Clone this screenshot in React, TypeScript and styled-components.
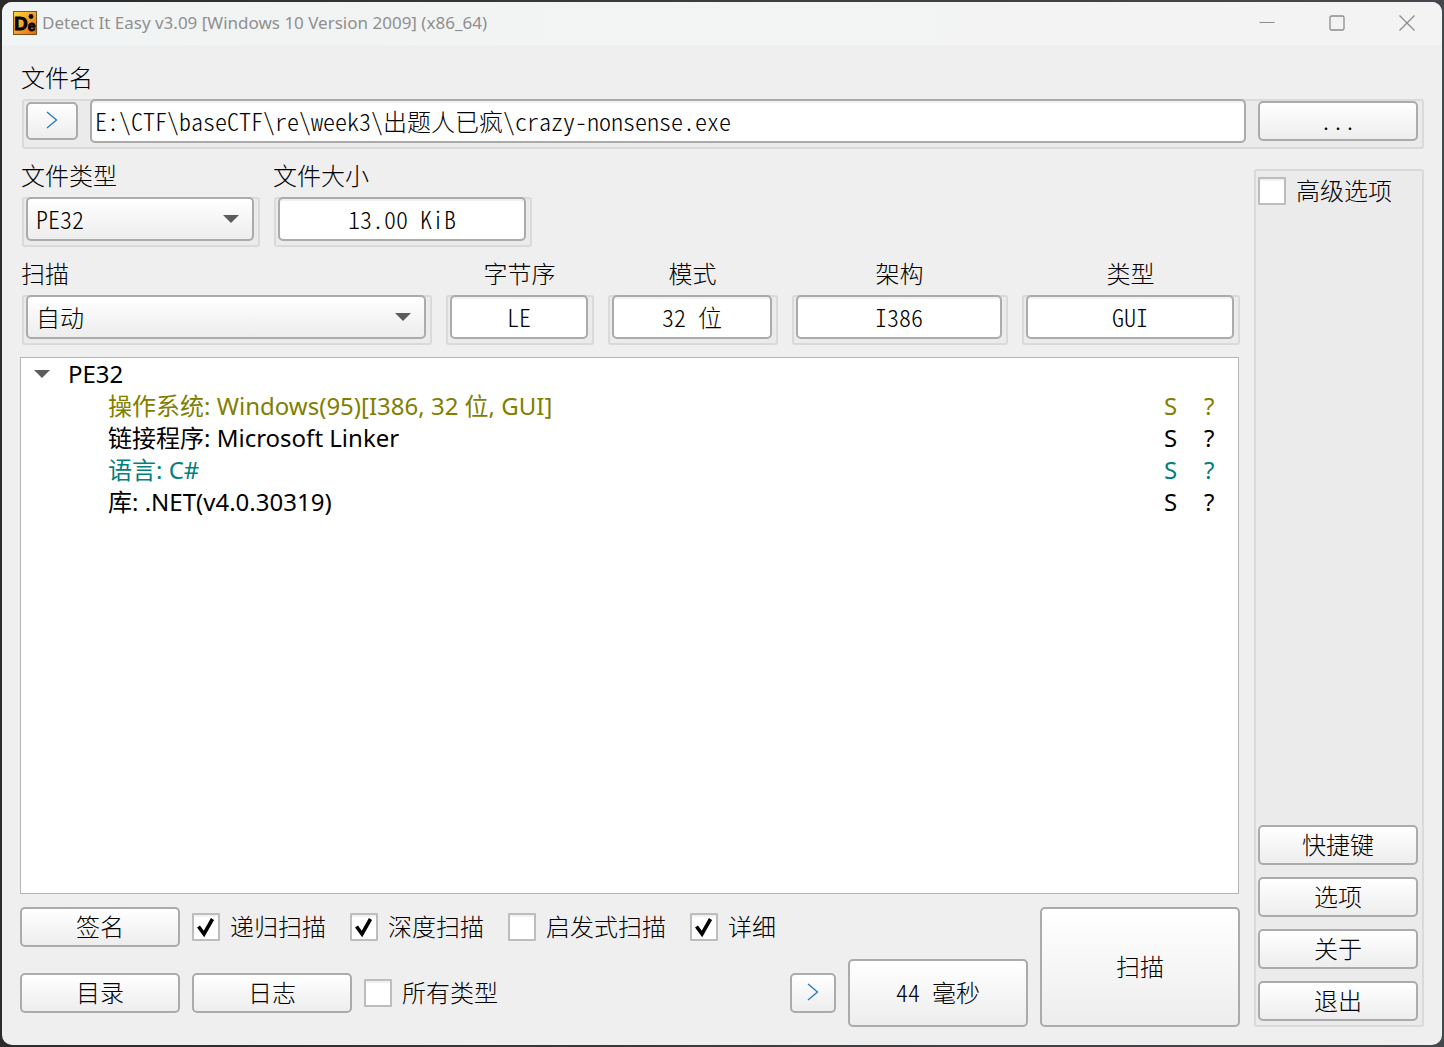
import React from 'react';
import styled, { createGlobalStyle, css } from 'styled-components';

const formFont = '"Noto Sans CJK SC", "Liberation Mono", monospace';
const treeFont = '"Noto Sans", "Noto Sans CJK SC", sans-serif';

const GlobalStyle = createGlobalStyle`
  *, *::before, *::after { box-sizing: border-box; }
  body {
    margin: 0;
    background: linear-gradient(90deg, #2b2b2b, #3c3c3c 50%, #45484c);
  }
  body, button, input, select {
    color: #000;
    font-family: ${formFont};
    font-size: 24px;
    font-weight: 300;
    line-height: 24px;
    font-feature-settings: "hwid";
  }
`;

const Desktop = styled.div`
  display: flex;
  min-height: 100vh;
  padding: 2px;
`;

const Window = styled.div`
  flex: 1;
  display: flex;
  flex-direction: column;
  min-width: 0;
  border-radius: 10px;
  background: #efefef;
  overflow: hidden;
`;

const TitleBar = styled.header`
  display: flex;
  align-items: center;
  height: 43px;
  padding: 0 11px 2px;
  gap: 5px;
  background: linear-gradient(90deg, #f1f4f4, #f3f3f3 70%);
`;

const Title = styled.h1`
  flex: 1;
  margin: 0;
  color: #8f8f8f;
  font-family: "Noto Sans", sans-serif;
  font-size: 17px;
  font-weight: 400;
  font-feature-settings: normal;
  white-space: nowrap;
`;

const Caption = styled.div`
  display: flex;
  gap: 22px;
`;

const CaptionButton = styled.button`
  display: grid;
  place-items: center;
  width: 48px;
  height: 36px;
  padding: 0;
  border: 0;
  background: none;
`;

const Body = styled.main`
  flex: 1;
  display: flex;
  flex-direction: column;
  padding: 20px 18px 18px;
`;

const Columns = styled.div`
  flex: 1;
  display: flex;
  gap: 14px;
`;

const Left = styled.div`
  flex: 1;
  display: flex;
  flex-direction: column;
  min-width: 0;
`;

const GroupRow = styled.div<{ $below?: number }>`
  display: flex;
  gap: 14px;
  padding: 0 0 ${(p) => p.$below ?? 14}px 2px;
`;

const Group = styled.div<{ $width?: number; $grow?: number; $center?: boolean }>`
  display: flex;
  flex-direction: column;
  gap: 10px;
  min-width: 0;
  ${(p) => p.$width && css`width: ${p.$width}px;`}
  ${(p) => p.$grow && css`flex: ${p.$grow} 1 0;`}
  ${(p) => p.$center && css`text-align: center;`}
`;

const Label = styled.label`
  display: block;
  margin-left: -1px;
  white-space: nowrap;
`;

const Frame = styled.div`
  display: flex;
  align-items: center;
  gap: 12px;
  padding: 0 6px 6px 4px;
  border-radius: 3px;
  background: #ebebeb;
  box-shadow: inset 0 0 0 2px #dadada;
`;

const control = css`
  border: 2px solid #ababab;
  border-radius: 5px;
`;

const TextBox = styled.input<{ $center?: boolean }>`
  ${control}
  flex: 1;
  width: 100%;
  min-width: 0;
  height: 44px;
  padding: 0 3px 2px;
  background: #fff;
  box-shadow: inset 0 2px 1px #f1f1f1;
  outline: none;
  text-align: ${(p) => (p.$center ? 'center' : 'left')};
`;

const Button = styled.button<{ $width?: number; $height?: number }>`
  ${control}
  display: grid;
  place-items: center;
  flex: none;
  width: ${(p) => p.$width ?? 160}px;
  height: ${(p) => p.$height ?? 40}px;
  padding: 0 0 2px;
  background: linear-gradient(#fff, #ededed);
`;

const SelectWrap = styled.div`
  flex: 1;
  display: grid;
  align-items: center;
  min-width: 0;

  & > * { grid-area: 1 / 1; }
  & > svg {
    justify-self: end;
    margin-right: 15px;
    pointer-events: none;
  }
`;

const SelectBox = styled.select`
  ${control}
  appearance: none;
  width: 100%;
  height: 44px;
  padding: 0 40px 0 8px;
  background: linear-gradient(#fff, #ededed);
  outline: none;
`;

const Tree = styled.ul`
  flex: 1;
  margin: 0 1px 13px 0;
  padding: 0;
  border: 1px solid #b4b4b4;
  background: #fff;
  list-style: none;
  font-family: ${treeFont};
  font-weight: 400;
  font-feature-settings: normal;
`;

const Branch = styled.ul`
  margin: 0;
  padding: 0;
  list-style: none;
`;

const TreeRow = styled.div<{ $color?: string; $child?: boolean }>`
  display: flex;
  align-items: center;
  height: 32px;
  padding-left: ${(p) => (p.$child ? 87 : 13)}px;
  color: ${(p) => p.$color ?? '#000'};
  white-space: nowrap;

  & > svg { margin-right: 18px; }
`;

const TreeText = styled.span`
  flex: 1;
`;

const TreeMark = styled.span`
  width: 40px;

  &:last-child { width: 34px; }
`;

const Bottom = styled.div`
  display: flex;
  gap: 12px;
`;

const BottomRows = styled.div`
  flex: 1;
  display: flex;
  flex-direction: column;
  gap: 12px;
`;

const BottomRow = styled.div`
  display: flex;
  align-items: center;
  gap: 12px;
`;

const Spacer = styled.div`
  flex: 1;
`;

const CheckLabel = styled.label`
  display: flex;
  align-items: center;
  gap: 10px;
  padding-right: 12px;
  white-space: nowrap;
`;

const CheckText = styled.span`
  padding-bottom: 2px;
`;

const CheckCell = styled.span`
  display: grid;

  & > * { grid-area: 1 / 1; }
  & > svg { visibility: hidden; pointer-events: none; }
  & > input:checked + svg { visibility: visible; }
`;

const CheckInput = styled.input`
  appearance: none;
  width: 28px;
  height: 28px;
  margin: 0;
  border: 2px solid #bdbdbd;
  border-radius: 1px;
  background: #fff;
  box-shadow: inset 0 2px 1px #f1f1f1;
`;

const Sidebar = styled.aside`
  display: flex;
  flex-direction: column;
  gap: 12px;
  width: 170px;
  margin-top: 6px;
  padding: 8px 6px 6px 4px;
  border-radius: 3px;
  background: #ebebeb;
  box-shadow: inset 0 0 0 2px #dadada;
`;

function Logo() {
  return (
    <svg width="24" height="24" viewBox="0 0 24 24" aria-hidden="true">
      <defs>
        <linearGradient id="logo" x1="0" y1="0" x2="1" y2="1">
          <stop offset="0" stopColor="#ffd83a" />
          <stop offset="0.5" stopColor="#f5a02a" />
          <stop offset="1" stopColor="#e8621a" />
        </linearGradient>
      </defs>
      <rect x="0.5" y="0.5" width="23" height="23" fill="url(#logo)" stroke="#7a5420" />
      <text x="1" y="19" fontFamily="Liberation Sans, sans-serif" fontWeight="700" fontSize="19" stroke="#000" strokeWidth="0.8">
        D<tspan fontSize="14" dy="1">e</tspan>
      </text>
      <circle cx="18" cy="5.5" r="2.4" />
    </svg>
  );
}

function Arrow() {
  return (
    <svg width="16" height="8" viewBox="0 0 16 8" aria-hidden="true">
      <path d="M0 0H16L8 8Z" fill="#5c5c5c" />
    </svg>
  );
}

function Chevron() {
  return (
    <svg width="12" height="18" viewBox="0 0 12 18" fill="none" stroke="#2b7dbd" strokeWidth="1.4" aria-hidden="true">
      <path d="M1 1L10.5 9L1 17" />
    </svg>
  );
}

function Check({ children, checked }: { children: string; checked?: boolean }) {
  return (
    <CheckLabel>
      <CheckCell>
        <CheckInput type="checkbox" defaultChecked={checked} />
        <svg width="28" height="28" viewBox="0 0 28 28" fill="none" stroke="#000" strokeWidth="3.6" aria-hidden="true">
          <path d="M6.5 13.5L12 21L20.5 6" />
        </svg>
      </CheckCell>
      <CheckText>{children}</CheckText>
    </CheckLabel>
  );
}

function Select({ id, options }: { id: string; options: string[] }) {
  return (
    <SelectWrap>
      <SelectBox id={id}>
        {options.map((o) => <option key={o}>{o}</option>)}
      </SelectBox>
      <Arrow />
    </SelectWrap>
  );
}

const info = [
  { id: 'endian', label: '字节序', value: 'LE', grow: 148 },
  { id: 'mode', label: '模式', value: '32 位', grow: 170 },
  { id: 'arch', label: '架构', value: 'I386', grow: 216 },
  { id: 'kind', label: '类型', value: 'GUI', grow: 218 },
];

const results = [
  { text: '操作系统: Windows(95)[I386, 32 位, GUI]', color: '#808000' },
  { text: '链接程序: Microsoft Linker', color: '#000000' },
  { text: '语言: C#', color: '#008080' },
  { text: '库: .NET(v4.0.30319)', color: '#000000' },
];

export default function App() {
  return (
    <Desktop>
      <GlobalStyle />
      <Window>
        <TitleBar>
          <Logo />
          <Title>Detect It Easy v3.09 [Windows 10 Version 2009] (x86_64)</Title>
          <Caption>
            <CaptionButton aria-label="最小化">
              <svg width="16" height="16" viewBox="0 0 16 16" stroke="#8c8c8c"><path d="M0.5 7.5H15.5" /></svg>
            </CaptionButton>
            <CaptionButton aria-label="最大化">
              <svg width="16" height="16" viewBox="0 0 16 16" fill="none" stroke="#8c8c8c" strokeWidth="1.3"><rect x="1" y="1" width="14" height="14" rx="1.5" /></svg>
            </CaptionButton>
            <CaptionButton aria-label="关闭">
              <svg width="16" height="16" viewBox="0 0 16 16" stroke="#8c8c8c" strokeWidth="1.3"><path d="M0.5 0.5L15.5 15.5M15.5 0.5L0.5 15.5" /></svg>
            </CaptionButton>
          </Caption>
        </TitleBar>
        <Body>
          <GroupRow>
            <Group $grow={1}>
              <Label htmlFor="path">文件名</Label>
              <Frame>
                <Button $width={52} $height={38} aria-label="展开"><Chevron /></Button>
                <TextBox id="path" defaultValue={'E:\\CTF\\baseCTF\\re\\week3\\出题人已疯\\crazy-nonsense.exe'} />
                <Button>...</Button>
              </Frame>
            </Group>
          </GroupRow>
          <Columns>
            <Left>
              <GroupRow>
                <Group $width={238}>
                  <Label htmlFor="type">文件类型</Label>
                  <Frame><Select id="type" options={['PE32']} /></Frame>
                </Group>
                <Group $width={258}>
                  <Label htmlFor="size">文件大小</Label>
                  <Frame><TextBox id="size" readOnly $center value="13.00 KiB" /></Frame>
                </Group>
              </GroupRow>
              <GroupRow $below={12}>
                <Group $grow={410}>
                  <Label htmlFor="scan">扫描</Label>
                  <Frame><Select id="scan" options={['自动']} /></Frame>
                </Group>
                {info.map((f) => (
                  <Group key={f.id} $grow={f.grow} $center>
                    <Label htmlFor={f.id}>{f.label}</Label>
                    <Frame><TextBox id={f.id} readOnly $center value={f.value} /></Frame>
                  </Group>
                ))}
              </GroupRow>
              <Tree>
                <li>
                  <TreeRow><Arrow /><TreeText>PE32</TreeText></TreeRow>
                  <Branch>
                    {results.map((r) => (
                      <li key={r.text}>
                        <TreeRow $child $color={r.color}>
                          <TreeText>{r.text}</TreeText>
                          <TreeMark>S</TreeMark>
                          <TreeMark>?</TreeMark>
                        </TreeRow>
                      </li>
                    ))}
                  </Branch>
                </li>
              </Tree>
              <Bottom>
                <BottomRows>
                  <BottomRow>
                    <Button>签名</Button>
                    <Check checked>递归扫描</Check>
                    <Check checked>深度扫描</Check>
                    <Check>启发式扫描</Check>
                    <Check checked>详细</Check>
                  </BottomRow>
                  <BottomRow>
                    <Button>目录</Button>
                    <Button>日志</Button>
                    <Check>所有类型</Check>
                    <Spacer />
                    <Button $width={46} aria-label="更多"><Chevron /></Button>
                    <Button $width={180} $height={68}>44 毫秒</Button>
                  </BottomRow>
                </BottomRows>
                <Button $width={200} $height={120}>扫描</Button>
              </Bottom>
            </Left>
            <Sidebar>
              <Check>高级选项</Check>
              <Spacer />
              <Button>快捷键</Button>
              <Button>选项</Button>
              <Button>关于</Button>
              <Button>退出</Button>
            </Sidebar>
          </Columns>
        </Body>
      </Window>
    </Desktop>
  );
}
